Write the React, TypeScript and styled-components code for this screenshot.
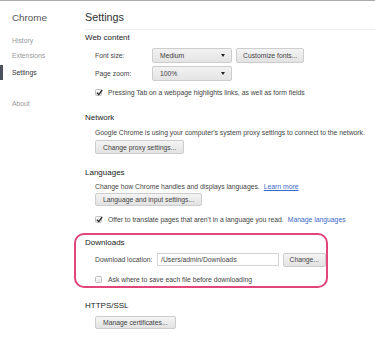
import { createGlobalStyle, styled } from "styled-components";

const GlobalStyle = createGlobalStyle`
  * { box-sizing: border-box; }
  body {
    margin: 0;
    background: #fff;
    font-family: "Liberation Sans", Arial, sans-serif;
    color: #444;
  }
`;

const Page = styled.div`
  width: 375px;
  height: 337px;
  border-top: 1px solid #ababab;
  display: flex;
  overflow: hidden;
`;

const Sidebar = styled.nav`
  width: 85px;
  display: flex;
  flex-direction: column;
`;

const Brand = styled.div`
  height: 28px;
  padding: 4px 0 0 12px;
  display: flex;
  align-items: center;
  font-size: 9.8px;
  color: #555;
`;

const NavItem = styled.div<{ $active?: boolean; $gap: number }>`
  position: relative;
  height: 15px;
  margin-top: ${(p) => p.$gap}px;
  padding-left: 12px;
  display: flex;
  align-items: center;
  font-size: 6.8px;
  color: ${(p) => (p.$active ? "#333" : "#999")};
  &::before {
    content: "";
    display: ${(p) => (p.$active ? "block" : "none")};
    position: absolute;
    left: 0;
    top: 0;
    width: 3px;
    height: 15px;
    background: #4a5260;
  }
`;

const Main = styled.main`
  flex: 1;
  display: flex;
  flex-direction: column;
`;

const Header = styled.div`
  height: 29px;
  padding-top: 4px;
  border-bottom: 1px solid #eee;
  display: flex;
  align-items: center;
  font-size: 10.8px;
  color: #333;
`;

const Section = styled.section<{ $gap: number }>`
  margin-top: ${(p) => p.$gap}px;
  display: flex;
  flex-direction: column;
`;

const Highlight = styled.section`
  margin: 7px 0 0 -11px;
  width: 254px;
  height: 55px;
  padding: 1px 0 0 9px;
  border: 2px solid #e2457c;
  border-radius: 10px;
  display: flex;
  flex-direction: column;
`;

const Title = styled.div<{ $h?: number }>`
  height: ${(p) => p.$h ?? 14}px;
  display: flex;
  align-items: center;
  font-size: 8px;
  color: #222;
`;

const Row = styled.div<{ $gap?: number; $h?: number }>`
  height: ${(p) => p.$h ?? 14}px;
  margin-top: ${(p) => p.$gap ?? 0}px;
  padding-left: 10px;
  display: flex;
  align-items: center;
  gap: 4px;
  font-size: 6.8px;
  color: #444;
  white-space: nowrap;
`;

const Label = styled.span<{ $w: number }>`
  width: ${(p) => p.$w}px;
  flex-shrink: 0;
`;

const Select = styled.div<{ $w: number }>`
  position: relative;
  width: ${(p) => p.$w}px;
  height: 15px;
  padding-left: 7px;
  display: flex;
  align-items: center;
  border: 1px solid #cdcdcd;
  border-radius: 2px;
  background: linear-gradient(#f2f2f2, #e4e4e4);
  color: #444;
  &::after {
    content: "";
    position: absolute;
    right: 6px;
    top: 5px;
    border-left: 2.5px solid transparent;
    border-right: 2.5px solid transparent;
    border-top: 3px solid #222;
  }
`;

const Button = styled.div<{ $h?: number; $pad?: number }>`
  height: ${(p) => p.$h ?? 14}px;
  padding: 0 ${(p) => p.$pad ?? 7}px;
  display: flex;
  align-items: center;
  border: 1px solid #cdcdcd;
  border-radius: 2px;
  background: linear-gradient(#f4f4f4, #e2e2e2);
  color: #444;
`;

const TextInput = styled.div`
  width: 126px;
  height: 13px;
  padding-left: 3px;
  display: flex;
  align-items: center;
  border: 1px solid #d4d4d4;
  background: #fff;
  color: #444;
`;

const Check = styled.span`
  width: 7px;
  height: 7px;
  margin-right: 2px;
  flex-shrink: 0;
  border: 1px solid #bdbdbd;
  border-radius: 1.5px;
  background: linear-gradient(#fafafa, #e6e6e6);
  position: relative;
  svg {
    position: absolute;
    left: 0;
    top: -1px;
  }
`;

const Link = styled.span<{ $underline?: boolean }>`
  color: #3a68c8;
  text-decoration: ${(p) => (p.$underline ? "underline" : "none")};
`;

const CheckBox = ({ checked }: { checked?: boolean }) => (
  <Check>
    {checked && (
      <svg width="7" height="7" viewBox="0 0 7 7">
        <path d="M1 3.8 L2.8 5.6 L6.2 0.8" fill="none" stroke="#222" strokeWidth="1.3" />
      </svg>
    )}
  </Check>
);

export default function App() {
  return (
    <>
      <GlobalStyle />
      <Page>
        <Sidebar>
          <Brand>Chrome</Brand>
          <NavItem $gap={4}>History</NavItem>
          <NavItem $gap={0}>Extensions</NavItem>
          <NavItem $gap={2} $active>
            Settings
          </NavItem>
          <NavItem $gap={16}>About</NavItem>
        </Sidebar>
        <Main>
          <Header>Settings</Header>
          <Section $gap={0}>
            <Title>Web content</Title>
            <Row $gap={3} $h={16}>
              <Label $w={53}>Font size:</Label>
              <Select $w={80}>Medium</Select>
              <Button $h={15} $pad={6}>Customize fonts...</Button>
            </Row>
            <Row $gap={2} $h={16}>
              <Label $w={53}>Page zoom:</Label>
              <Select $w={80}>100%</Select>
            </Row>
            <Row $gap={4}>
              <CheckBox checked />
              Pressing Tab on a webpage highlights links, as well as form fields
            </Row>
          </Section>
          <Section $gap={11}>
            <Title>Network</Title>
            <Row $gap={1}>
              Google Chrome is using your computer's system proxy settings to connect to the network.
            </Row>
            <Row $gap={1}>
              <Button>Change proxy settings...</Button>
            </Row>
          </Section>
          <Section $gap={11}>
            <Title>Languages</Title>
            <Row $gap={1} $h={12}>
              Change how Chrome handles and displays languages.{" "}
              <Link $underline>Learn more</Link>
            </Row>
            <Row $gap={1} $h={13}>
              <Button $h={13}>Language and input settings...</Button>
            </Row>
            <Row $gap={6}>
              <CheckBox checked />
              Offer to translate pages that aren't in a language you read.{" "}
              <Link>Manage languages</Link>
            </Row>
          </Section>
          <Highlight>
            <Title $h={12}>Downloads</Title>
            <Row $gap={4} $h={15}>
              <Label $w={58}>Download location:</Label>
              <TextInput>/Users/admin/Downloads</TextInput>
              <Button $pad={6}>Change...</Button>
            </Row>
            <Row $gap={5}>
              <CheckBox />
              Ask where to save each file before downloading
            </Row>
          </Highlight>
          <Section $gap={10}>
            <Title>HTTPS/SSL</Title>
            <Row $gap={4} $h={13}>
              <Button $h={13}>Manage certificates...</Button>
            </Row>
          </Section>
        </Main>
      </Page>
    </>
  );
}
